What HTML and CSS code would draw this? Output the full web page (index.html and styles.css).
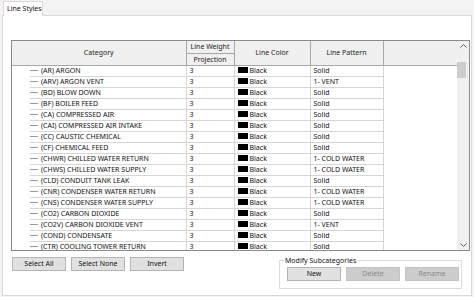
FILE: index.html
```html
<!DOCTYPE html>
<html>
<head>
<meta charset="utf-8">
<link rel="stylesheet" href="styles.css">
</head>
<body>
<div class="tabs"><div class="tab">Line Styles</div></div>
<div class="panel">
  <div class="grid">
    <div class="table-wrap">
      <table class="styles">
        <colgroup>
          <col class="c-indent"><col class="c-name"><col class="c-weight"><col class="c-color"><col class="c-pattern"><col class="c-fill">
        </colgroup>
        <thead>
          <tr class="h1">
            <th colspan="2" rowspan="2">Category</th>
            <th>Line Weight</th>
            <th rowspan="2">Line Color</th>
            <th rowspan="2">Line Pattern</th>
            <th rowspan="2" class="hfill"></th>
          </tr>
          <tr class="h2"><th>Projection</th></tr>
        </thead>
        <tbody>
          <tr><td class="ind"></td><td class="name">(AR) ARGON</td><td>3</td><td class="color"><span class="sw"></span>Black</td><td>Solid</td><td class="fill"></td></tr>
          <tr><td class="ind"></td><td class="name">(ARV) ARGON VENT</td><td>3</td><td class="color"><span class="sw"></span>Black</td><td>1- VENT</td><td class="fill"></td></tr>
          <tr><td class="ind"></td><td class="name">(BD) BLOW DOWN</td><td>3</td><td class="color"><span class="sw"></span>Black</td><td>Solid</td><td class="fill"></td></tr>
          <tr><td class="ind"></td><td class="name">(BF) BOILER FEED</td><td>3</td><td class="color"><span class="sw"></span>Black</td><td>Solid</td><td class="fill"></td></tr>
          <tr><td class="ind"></td><td class="name">(CA) COMPRESSED AIR</td><td>3</td><td class="color"><span class="sw"></span>Black</td><td>Solid</td><td class="fill"></td></tr>
          <tr><td class="ind"></td><td class="name">(CAI) COMPRESSED AIR INTAKE</td><td>3</td><td class="color"><span class="sw"></span>Black</td><td>Solid</td><td class="fill"></td></tr>
          <tr><td class="ind"></td><td class="name">(CC) CAUSTIC CHEMICAL</td><td>3</td><td class="color"><span class="sw"></span>Black</td><td>Solid</td><td class="fill"></td></tr>
          <tr><td class="ind"></td><td class="name">(CF) CHEMICAL FEED</td><td>3</td><td class="color"><span class="sw"></span>Black</td><td>Solid</td><td class="fill"></td></tr>
          <tr><td class="ind"></td><td class="name">(CHWR) CHILLED WATER RETURN</td><td>3</td><td class="color"><span class="sw"></span>Black</td><td>1- COLD WATER</td><td class="fill"></td></tr>
          <tr><td class="ind"></td><td class="name">(CHWS) CHILLED WATER SUPPLY</td><td>3</td><td class="color"><span class="sw"></span>Black</td><td>1- COLD WATER</td><td class="fill"></td></tr>
          <tr><td class="ind"></td><td class="name">(CLD) CONDUIT TANK LEAK</td><td>3</td><td class="color"><span class="sw"></span>Black</td><td>Solid</td><td class="fill"></td></tr>
          <tr><td class="ind"></td><td class="name">(CNR) CONDENSER WATER RETURN</td><td>3</td><td class="color"><span class="sw"></span>Black</td><td>1- COLD WATER</td><td class="fill"></td></tr>
          <tr><td class="ind"></td><td class="name">(CNS) CONDENSER WATER SUPPLY</td><td>3</td><td class="color"><span class="sw"></span>Black</td><td>1- COLD WATER</td><td class="fill"></td></tr>
          <tr><td class="ind"></td><td class="name">(CO2) CARBON DIOXIDE</td><td>3</td><td class="color"><span class="sw"></span>Black</td><td>Solid</td><td class="fill"></td></tr>
          <tr><td class="ind"></td><td class="name">(CO2V) CARBON DIOXIDE VENT</td><td>3</td><td class="color"><span class="sw"></span>Black</td><td>1- VENT</td><td class="fill"></td></tr>
          <tr><td class="ind"></td><td class="name">(COND) CONDENSATE</td><td>3</td><td class="color"><span class="sw"></span>Black</td><td>Solid</td><td class="fill"></td></tr>
          <tr><td class="ind"></td><td class="name">(CTR) COOLING TOWER RETURN</td><td>3</td><td class="color"><span class="sw"></span>Black</td><td>Solid</td><td class="fill"></td></tr>
        </tbody>
      </table>
    </div>
    <div class="scrollbar">
      <svg class="arrow" width="7" height="4" viewBox="0 0 7 4"><path d="M0.5 3.5 L3.5 0.5 L6.5 3.5" fill="none" stroke="#606060" stroke-width="1"/></svg>
      <div class="track"><div class="thumb"></div></div>
      <svg class="arrow" width="7" height="4" viewBox="0 0 7 4"><path d="M0.5 0.5 L3.5 3.5 L6.5 0.5" fill="none" stroke="#606060" stroke-width="1"/></svg>
    </div>
  </div>
  <div class="bottom">
    <div class="btns">
      <button class="btn">Select All</button>
      <button class="btn">Select None</button>
      <button class="btn">Invert</button>
    </div>
    <fieldset class="group">
      <legend>Modify Subcategories</legend>
      <div class="gbtns">
        <button class="btn">New</button>
        <button class="btn dis">Delete</button>
        <button class="btn dis">Rename</button>
      </div>
    </fieldset>
  </div>
</div>
</body>
</html>
```
FILE: styles.css
```css
* { box-sizing: border-box; }
html, body { margin: 0; padding: 0; }
body {
  width: 474px; height: 297px; overflow: hidden;
  background: #f3f3f3;
  font-family: "Noto Sans", "Open Sans", sans-serif;
  font-size: 7px;
  color: #111;
}
.tabs { height: 15px; padding-left: 3px; padding-top: 1px; display: flex; }
.tab {
  width: 40px; height: 15px;
  background: #fff;
  border: 1px solid #d9d9d9; border-bottom: none;
  padding-left: 3px; line-height: 13px;
  position: relative; z-index: 1;
}
.panel {
  margin-left: 2px; width: 470px; height: 281px;
  background: #fff;
  border: 1px solid #d9d9d9;
  padding: 24px 0 0 8px;
}
.grid {
  width: 459px; height: 211px;
  border: 1px solid #8a8a8a;
  display: flex;
}
.table-wrap { width: 445px; height: 209px; overflow: hidden; }
table.styles {
  border-collapse: collapse;
  table-layout: fixed;
  width: 445px;
}
.c-indent { width: 18px; }
.c-name { width: 156px; }
.c-weight { width: 48px; }
.c-color { width: 76px; }
.c-pattern { width: 73px; }
.c-fill { width: 74px; }
thead th {
  background: #f0f0f0;
  font-weight: normal;
  color: #222;
  border: 1px solid #a8a8a8;
  border-top: none;
  height: 12px; padding: 0;
  line-height: 11px;
  text-align: center;
}
thead th:first-child { border-left: none; }
thead th.hfill { border-right: none; }
tbody td {
  height: 11px; padding: 0 0 0 3px;
  line-height: 10px;
  border: 1px solid #d6d6d6;
  border-top: none;
  white-space: nowrap; overflow: hidden;
}
tbody td.ind { border: none; border-right: none; padding: 0; }
tbody td.name { border-left: none; padding-left: 0; }
tbody td.name::before {
  content: ""; display: inline-block;
  width: 8px; height: 1px; background: #9a9a9a;
  vertical-align: middle; margin: 0 3px 0 0;
}
tbody td.fill { border: none; }
.sw {
  display: inline-block; width: 10px; height: 6px;
  background: #000; margin-right: 2px; vertical-align: -0.5px;
}
.scrollbar {
  width: 12px; height: 209px;
  background: #f0f0f0;
  display: flex; flex-direction: column; align-items: center;
  padding: 3px 0;
}
.arrow { flex: none; }
.track { flex: 1; width: 100%; padding-top: 14px; }
.thumb { width: 9px; height: 16px; background: #cdcdcd; margin-left: 0; }
.bottom { display: flex; align-items: flex-start; padding-top: 5px; }
.btns { display: flex; gap: 5px; padding-left: 1px; padding-top: 1px; }
.btn {
  font: inherit; color: #111;
  width: 54px; height: 14px; padding: 0;
  background: #e1e1e1;
  border: 1px solid #b4b4b4;
  line-height: 12px;
}
.btn.dis { background: #cccccc; border-color: #c4c4c4; color: #8a8a8a; }
.group {
  margin: 0 0 0 auto; margin-right: 9px;
  width: 183px; height: 33px;
  border: 1px solid #dcdcdc;
  padding: 0 0 0 7px;
  min-width: 0;
}
.group legend { padding: 0 1px; margin-left: -3px; line-height: 9px; }
.gbtns { display: flex; gap: 5px; padding-top: 2px; }
```
